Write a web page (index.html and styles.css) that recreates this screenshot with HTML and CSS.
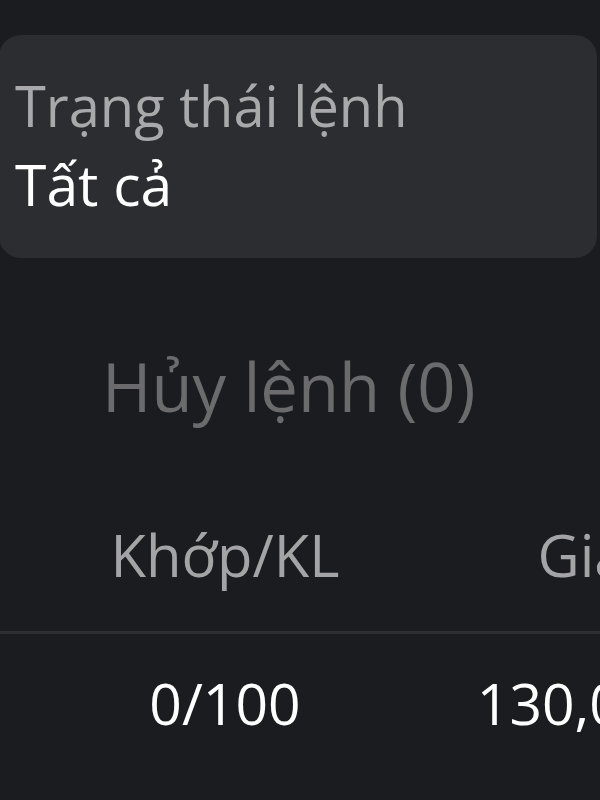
FILE: index.html
```html
<!doctype html>
<html>
 <head>
  <meta charset="UTF-8">
  <title>Trạng thái lệnh</title>
  <link rel="stylesheet" href="styles.css">
 </head>
 <body>
  <div class="page">
	<!-- bộ lọc trạng thái -->
	<div class="filter">
		<div class="filterLabel">Trạng thái lệnh</div>
		<div class="filterValue">Tất cả</div>
	</div>

	<div class="cancel">Hủy lệnh (0)</div>

	<!-- bảng lệnh -->
	<div class="table">
		<div class="row head">
			<div class="cell">Khớp/KL</div>
			<div class="cell">Giá</div>
		</div>
		<div class="row">
			<div class="cell">0/100</div>
			<div class="cell">130,000</div>
		</div>
	</div>
  </div>
 </body>
</html>
```

FILE: styles.css
```css
	*{
		margin:0;
		padding:0;
		box-sizing:border-box;
	}
	html,body{
		background-color:#1b1c20;
		height:100%;
		overflow:hidden;
	}
	body{
		font-family:"Open Sans","Noto Sans",sans-serif;
		white-space:nowrap;
	}
	.page{
		width:600px;
		padding-top:35px;
	}
	.filter{
		margin:0 3px 0 -1px;
		height:223px;
		padding:28px 0 0 16px;
		background-color:#2c2d30;
		border-radius:22px;
	}
	.filterLabel{
		font-size:56px;
		line-height:85px;
		color:#a9a9ab;
	}
	.filterValue{
		font-size:57px;
		line-height:72px;
		color:#ffffff;
	}
	.cancel{
		margin-top:88px;
		padding-left:102px;
		font-size:67px;
		line-height:80px;
		color:#6b6b6d;
	}
	.table{
		margin-top:94px;
	}
	.row{
		display:grid;
		grid-template-columns:450px 264px;
		line-height:70px;
	}
	.row>.cell{
		text-align:center;
	}
	.head{
		height:114px;
		border-bottom:3px solid #2e2f32;
		color:#a4a4a6;
		font-size:58px;
	}
	.row:not(.head){
		padding-top:34px;
		color:#ffffff;
		font-size:57px;
	}
```
